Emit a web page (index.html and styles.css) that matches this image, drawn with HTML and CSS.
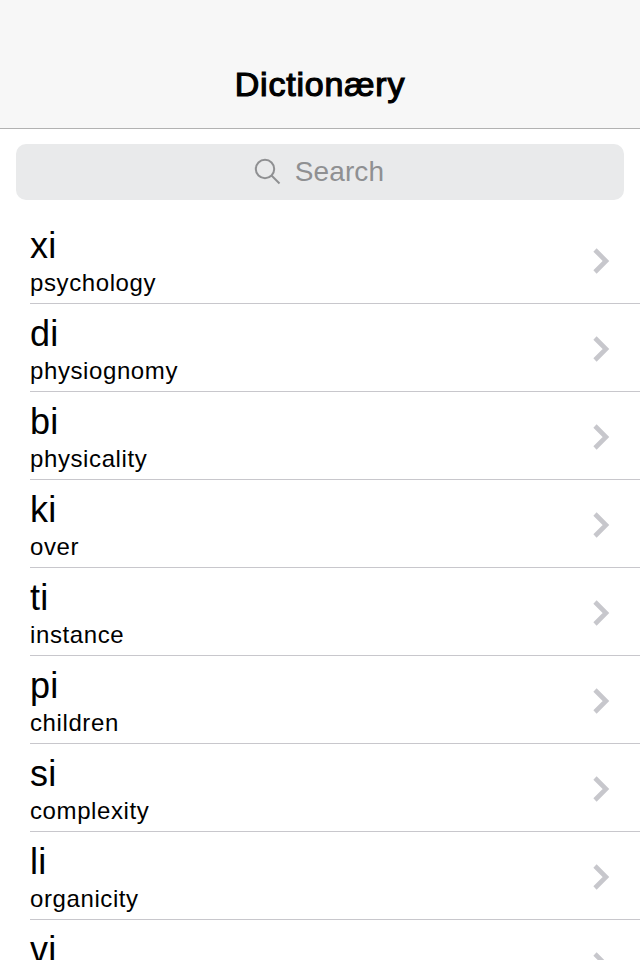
FILE: index.html
```html
<!DOCTYPE html>
<html lang="en">
<head>
<meta charset="utf-8">
<title>Dictionæry</title>
<link rel="stylesheet" href="styles.css">
</head>
<body>
<header class="navbar"><h1 class="title">Dictionæry</h1></header>
<div class="search">
<svg class="glass" width="28" height="28" viewBox="0 0 28 28"><circle cx="11" cy="11" r="9.2"/><path d="M17.5 17.5L25.5 25.5"/></svg>
<span class="placeholder">Search</span>
</div>
<ul class="list">
<li class="row"><div class="text"><span class="word">xi</span><span class="meaning">psychology</span></div><svg class="chevron" width="18" height="26" viewBox="0 0 18 26"><path d="M2 2L13 13L2 24"/></svg></li>
<li class="row"><div class="text"><span class="word">di</span><span class="meaning">physiognomy</span></div><svg class="chevron" width="18" height="26" viewBox="0 0 18 26"><path d="M2 2L13 13L2 24"/></svg></li>
<li class="row"><div class="text"><span class="word">bi</span><span class="meaning">physicality</span></div><svg class="chevron" width="18" height="26" viewBox="0 0 18 26"><path d="M2 2L13 13L2 24"/></svg></li>
<li class="row"><div class="text"><span class="word">ki</span><span class="meaning">over</span></div><svg class="chevron" width="18" height="26" viewBox="0 0 18 26"><path d="M2 2L13 13L2 24"/></svg></li>
<li class="row"><div class="text"><span class="word">ti</span><span class="meaning">instance</span></div><svg class="chevron" width="18" height="26" viewBox="0 0 18 26"><path d="M2 2L13 13L2 24"/></svg></li>
<li class="row"><div class="text"><span class="word">pi</span><span class="meaning">children</span></div><svg class="chevron" width="18" height="26" viewBox="0 0 18 26"><path d="M2 2L13 13L2 24"/></svg></li>
<li class="row"><div class="text"><span class="word">si</span><span class="meaning">complexity</span></div><svg class="chevron" width="18" height="26" viewBox="0 0 18 26"><path d="M2 2L13 13L2 24"/></svg></li>
<li class="row"><div class="text"><span class="word">li</span><span class="meaning">organicity</span></div><svg class="chevron" width="18" height="26" viewBox="0 0 18 26"><path d="M2 2L13 13L2 24"/></svg></li>
<li class="row"><div class="text"><span class="word">vi</span></div><svg class="chevron" width="18" height="26" viewBox="0 0 18 26"><path d="M2 2L13 13L2 24"/></svg></li>
</ul>
</body>
</html>
```
FILE: styles.css
```css
* { box-sizing: border-box; }
body { margin: 0; height: 960px; overflow: hidden; background: #fff; color: #000; font-family: "Liberation Sans", Arial, sans-serif; }
.navbar { height: 129px; padding-top: 64px; background: #f7f7f7; border-bottom: 1px solid #b2b2b2; text-align: center; }
.title { margin: 0; font-size: 34px; line-height: 40px; font-weight: 400; letter-spacing: 0.8px; -webkit-text-stroke: 1.2px #000; }
.search { display: flex; align-items: center; justify-content: center; gap: 13px; height: 56px; margin: 15px 16px 16px; padding-right: 2px; border-radius: 10px; background: #e9eaeb; color: #8f9092; }
.glass { fill: none; stroke: #8f9092; stroke-width: 2; }
.placeholder { font-size: 28px; line-height: 36px; letter-spacing: 0.1px; }
.list { margin: 0; padding: 0 0 0 30px; list-style: none; }
.row { display: flex; align-items: center; justify-content: space-between; height: 88px; padding-right: 29px; border-bottom: 1px solid #c8c7cc; }
.text { display: flex; flex-direction: column; align-self: flex-start; padding-top: 9px; }
.word { font-size: 36px; line-height: 42px; letter-spacing: 0.2px; }
.meaning { margin-top: 1px; font-size: 24px; line-height: 30px; letter-spacing: 0.6px; }
.chevron { margin-top: 2px; fill: none; stroke: #c7c7cc; stroke-width: 4.6; }
```
